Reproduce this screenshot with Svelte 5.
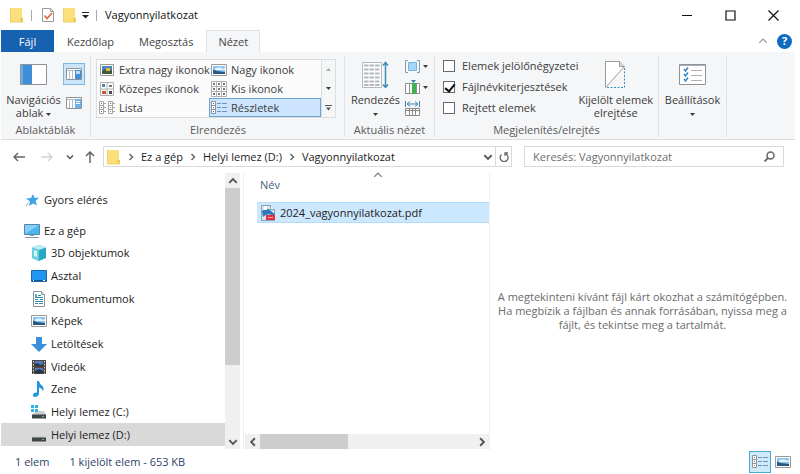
<script lang="ts">
	type Item = { label: string; icon: string };

	const tabs = ['Kezdőlap', 'Megosztás', 'Nézet'];
	let tab = $state('Nézet');

	const layouts: Item[] = [
		{ label: 'Extra nagy ikonok', icon: 'xl' },
		{ label: 'Nagy ikonok', icon: 'picture' },
		{ label: 'Közepes ikonok', icon: 'medium' },
		{ label: 'Kis ikonok', icon: 'small' },
		{ label: 'Lista', icon: 'list' },
		{ label: 'Részletek', icon: 'details' }
	];
	let layout = $state('Részletek');

	let options = $state([
		{ label: 'Elemek jelölőnégyzetei', checked: false },
		{ label: 'Fájlnévkiterjesztések', checked: true },
		{ label: 'Rejtett elemek', checked: false }
	]);

	const crumbs = ['Ez a gép', 'Helyi lemez (D:)', 'Vagyonnyilatkozat'];

	const places: Item[] = [
		{ label: '3D objektumok', icon: 'cube' },
		{ label: 'Asztal', icon: 'desktop' },
		{ label: 'Dokumentumok', icon: 'docs' },
		{ label: 'Képek', icon: 'picture' },
		{ label: 'Letöltések', icon: 'download' },
		{ label: 'Videók', icon: 'video' },
		{ label: 'Zene', icon: 'music' },
		{ label: 'Helyi lemez (C:)', icon: 'diskc' },
		{ label: 'Helyi lemez (D:)', icon: 'disk' }
	];
	let place = $state('Helyi lemez (D:)');
	let search = $state('');
</script>

{#snippet icon(name: string)}
	<svg class="icon" viewBox="0 0 16 16" aria-hidden="true">
		{#if name === 'folder'}
			<path d="M2 1h12v9l1 1v4H2z" fill="#fbdf7d" />
			<path d="M12 11h3v4h-3z" fill="#efc95a" />
			<path d="M2 1h1v14H2zM2 14.500h13v1H2z" fill="#f1d06a" />
		{:else if name === 'props'}
			<path d="M2.500 1.500h8l3 3v10h-11z" fill="#fff" stroke="#9a9a9a" />
			<path d="M10.500 1.500v3h3" fill="none" stroke="#9a9a9a" />
			<path d="M4.500 8.500l2.500 3 5-5.500" fill="none" stroke="#e0643c" stroke-width="1.600" />
		{:else if name === 'xl'}
			<path d="M1.500 2.500h13v11h-13z" fill="#fff" stroke="#9a9a9a" />
			<path d="M3 4h10v8H3z" fill="#4a86c4" />
			<path d="M3 9l3-2 3 2 4-1v4H3z" fill="#3f5a34" />
			<path d="M7 6h4v3H7z" fill="#e8b73c" />
		{:else if name === 'picture'}
			<path d="M.5 2.500h15v11H.5z" fill="#fff" stroke="#9a9a9a" />
			<path d="M2 4h12v8H2z" fill="#8ec5ee" />
			<path d="M4 6.500q5-2 8 .5l2-1v2H4z" fill="#e6f4fd" />
			<path d="M2 7.500l4 1.500 8 1v2H2z" fill="#2b5a80" />
		{:else if name === 'medium'}
			<path d="M1.500 1.500h13v13h-13zM8 2v12M2 8h12" fill="#fff" stroke="#b0b0b0" />
			<path d="M3 3h3v3H3z" fill="#4a86b8" />
			<path d="M10 4h3v2h-3z" fill="#777" />
			<path d="M3 10h4v3H3z" fill="#d0583e" />
			<path d="M10 10h3v3h-3z" fill="#3b5348" />
		{:else if name === 'small'}
			<path d="M.5.5h15v15H.5zM5.500 1v14M10.500 1v14M1 5.500h14M1 10.500h14" fill="#fff" stroke="#b0b0b0" />
			<path d="M2 2h2v2H2zM7 2h2v2H7zM12 2h2v2h-2zM2 7h2v2H2zM7 7h2v2H7zM12 7h2v2h-2zM2 12h2v2H2zM7 12h2v2H7zM12 12h2v2h-2z" fill="#777" />
		{:else if name === 'list'}
			<path d="M.5 1.500h4v12h-4zM.5 5.500h4M.5 9.500h4M9.500 1.500h4v12h-4zM9.500 5.500h4M9.500 9.500h4" fill="#fff" stroke="#a4a4a4" />
			<path d="M2 3.500h1M2 7.500h1M2 11.500h1M11 3.500h1M11 7.500h1M11 11.500h1" stroke="#777" />
			<path d="M5 3.500h2M5 7.500h2M5 11.500h2M14 3.500h2M14 7.500h2M14 11.500h2" stroke="#aaa" />
		{:else if name === 'details'}
			<path d="M.5 1.500h4v12h-4zM.5 5.500h4M.5 9.500h4" fill="#fff" stroke="#929292" />
			<path d="M2 3.500h1M2 7.500h1M2 11.500h1" stroke="#777" />
			<path d="M6 3.500h4M6 7.500h4M6 11.500h4M11 3.500h5M11 7.500h5M11 11.500h5" stroke="#6f93bd" />
		{:else if name === 'star'}
			<path d="M9 2l1.500 4 4.500-.5-3.500 3.500 1.500 4.500-4-2L5 14l1-4.500L2 6.500l5-.5z" fill="#3ba5e4" />
			<path d="M4.500 10.500L2 14" stroke="#8aa5b8" />
		{:else if name === 'pc'}
			<path d="M.5 1.500h15v10H.5z" fill="#4db4ef" stroke="#5686a8" />
			<path d="M1 2h14L1 11z" fill="#84d0f8" />
			<path d="M6 12h4v1H6z" fill="#86a5ba" />
			<path d="M1 14h14v1H1z" fill="#8e9aa3" />
		{:else if name === 'cube'}
			<path d="M8 0l7 2.500v10.500l-7 3-7-3V2.500z" fill="#27a8c4" />
			<path d="M8 0l7 2.500-7 2.500-7-2.500z" fill="#bdeef5" />
			<path d="M1 2.500l7 2.500v11l-7-3z" fill="#6cd0df" />
			<path d="M3 5l3 1v6l-3-1z" fill="#d6f4f7" />
		{:else if name === 'desktop'}
			<path d="M.5 2.500h15v11H.5z" fill="#2196f3" stroke="#1769b0" />
			<path d="M1 12h14v1H1z" fill="#12568f" />
			<path d="M2 12h1v1H2zM12 12h2v1h-2z" fill="#fff" />
		{:else if name === 'docs'}
			<path d="M2.500.5h8l3 3v12h-11z" fill="#fff" stroke="#8b9499" />
			<path d="M10.500.5v3h3" fill="#dde4e8" stroke="#8b9499" />
			<path d="M7 4.500h3M4 6.500h8M4 8.500h3M9 8.500h3M4 10.500h8M4 12.500h3M8 12.500h4" stroke="#3488a8" />
			<path d="M4 3h2v3H4z" fill="#69aec8" />
		{:else if name === 'download'}
			<path d="M5 1h6v7h5l-8 8-8-8h5z" fill="#3a8fdd" />
		{:else if name === 'video'}
			<path d="M1 1h14v14H1z" fill="#4a4540" />
			<path d="M4 2h8v5H4zM4 9h8v5H4z" fill="#4f7dbd" />
			<path d="M4 5l3-1 2 2 3-1v2H4zM4 12l4-2 4 2v2H4z" fill="#24374e" />
			<path d="M2.500 2v13M13.500 2v13" stroke="#d9cda9" stroke-dasharray="1.500 1.500" />
		{:else if name === 'music'}
			<path d="M6 0h2q.5 3 3 4.500 2.500 2.500 1 6-.5-3-4-4V13q-1 3-4 3-2.500-.5-2-2.500Q3 11 6 11.500z" fill="#2196dc" />
		{:else if name === 'disk' || name === 'diskc'}
			{#if name === 'diskc'}
				<path d="M5 7h8l2 4H1z" fill="#c9cdd0" />
				<path d="M0 1h3v3H0zM4 1h3v3H4zM0 5h3v3H0zM4 5h3v3H4z" fill="#2fb4dc" />
			{:else}
				<path d="M3 9h10l2 2H1z" fill="#c9cdd0" />
			{/if}
			<path d="M1 10.500h14v4H1z" fill="#3e4447" />
			<path d="M11 12h2v1h-2z" fill="#54d46c" />
		{:else if name === 'pdf'}
			<path d="M1.500.5h9l4 4v11h-13z" fill="#d6e5f2" stroke="#8aa1b5" />
			<path d="M10.500.5v4h4" fill="#fff" stroke="#8aa1b5" />
			<path d="M2 6q5-4 8-1t5 4l-2 2Q8 7 3 12z" fill="#2d78b5" />
			<path d="M4 1h3v4H4z" fill="#fff" />
			<path d="M6 10h9v5H6z" fill="#e3303e" />
			<path d="M8 12.500h5" stroke="#f5a0a5" />
		{/if}
	</svg>
{/snippet}

{#snippet chevron(dir: string)}
	<svg class="chev {dir}" viewBox="0 0 8 8" aria-hidden="true">
		<path d="M1 2.500L4 5.500 7 2.500" fill="none" stroke="currentColor" />
	</svg>
{/snippet}

{#snippet caret()}
	<svg class="caret" viewBox="0 0 5 3" aria-hidden="true"><path d="M0 0h5L2.500 3z" fill="currentColor" /></svg>
{/snippet}

<div class="window">
	<header class="titlebar">
		{@render icon('folder')}
		<span class="sep"></span>
		<button aria-label="Tulajdonságok">{@render icon('props')}</button>
		<button aria-label="Új mappa">{@render icon('folder')}</button>
		<button class="customize" aria-label="Testreszabás">
			<svg width="7" height="7" viewBox="0 0 7 7"><path d="M0 .5h7" stroke="#222" /><path d="M0 3h7L3.500 6.500z" fill="#222" /></svg>
		</button>
		<span class="sep"></span>
		<h1>Vagyonnyilatkozat</h1>
		<div class="controls">
			<button aria-label="Kis méret">
				<svg width="11" height="11" viewBox="0 0 11 11"><path d="M0 5.500h10" stroke="#111" /></svg>
			</button>
			<button aria-label="Teljes méret">
				<svg width="11" height="11" viewBox="0 0 11 11"><path d="M1 1h9v9H1z" fill="none" stroke="#111" stroke-width="1.200" /></svg>
			</button>
			<button aria-label="Bezárás">
				<svg width="11" height="11" viewBox="0 0 11 11"><path d="M.5.5l10 10M10.500.5l-10 10" stroke="#111" stroke-width="1.200" /></svg>
			</button>
		</div>
	</header>

	<nav class="tabs">
		<button class="file">Fájl</button>
		{#each tabs as t}
			<button class:active={tab === t} onclick={() => (tab = t)}>{t}</button>
		{/each}
		<div class="help">
			<button class="collapse" aria-label="Menüszalag összecsukása">{@render chevron('up')}</button>
			<button class="ask" aria-label="Súgó">?</button>
		</div>
	</nav>

	<div class="ribbon">
		<section class="panes">
			<div class="content">
				<button class="big">
					<svg width="27" height="21" viewBox="0 0 27 21">
						<path d="M.5.5h26v20H.5z" fill="#fff" stroke="#8c9298" />
						<path d="M1 1h11v19H1z" fill="#3f8fd8" />
						<path d="M1 1h2v19H1z" fill="#6cabe4" />
					</svg>
					<span>Navigációs<br />ablak {@render caret()}</span>
				</button>
				<div class="toggles">
					<button class="on" aria-label="Betekintő ablaktábla">
						<svg width="16" height="12" viewBox="0 0 16 12">
							<path d="M.5.5h15v11H.5z" fill="#fff" stroke="#8c9298" />
							<path d="M9 2h6v9H9z" fill="#3f8fd8" /><path d="M10 3h4v3h-4z" fill="#b9d9f4" />
							<path d="M3.500 3v8M6.500 3v8M1 2.500h8" stroke="#b8bcc0" />
						</svg>
					</button>
					<button aria-label="Részletek ablaktábla">
						<svg width="16" height="12" viewBox="0 0 16 12">
							<path d="M.5.5h15v11H.5z" fill="#fff" stroke="#8c9298" />
							<path d="M9 2h6v9H9z" fill="#6fb1ea" /><path d="M10 4.500h4M10 6.500h4" stroke="#fff" />
							<path d="M3.500 3v8M6.500 3v8M1 2.500h8" stroke="#b8bcc0" />
						</svg>
					</button>
				</div>
			</div>
			<h2>Ablaktáblák</h2>
		</section>

		<section class="arrange">
			<div class="content">
				<div class="gallery">
					{#each layouts as l}
						<button class:active={layout === l.label} onclick={() => (layout = l.label)}>
							{@render icon(l.icon)}{l.label}
						</button>
					{/each}
				</div>
				<div class="spin">
					<button class="off up" aria-label="Fel">{@render caret()}</button>
					<button aria-label="Le">{@render caret()}</button>
					<button aria-label="Több">
						<svg width="7" height="6" viewBox="0 0 7 6"><path d="M0 .5h7" stroke="#555" /><path d="M1 2.500h5L3.500 5.500z" fill="#555" /></svg>
					</button>
				</div>
			</div>
			<h2>Elrendezés</h2>
		</section>

		<section class="current">
			<div class="content">
				<button class="big">
					<svg width="27" height="27" viewBox="0 0 27 27">
						<path d="M.5 1.500h19v25H.5z" fill="#fff" stroke="#b4b8bb" />
						<path d="M2 4.500h16M2 8.500h16M2 12.500h16M2 16.500h16M2 20.500h16M2 24h16" stroke="#b3b8bb" stroke-dasharray="4.500 1" stroke-width="2" />
						<path d="M23.500 2v24M21 4.500L23.500 1.500 26 4.500M21 23.500l2.500 3 2.500-3" fill="none" stroke="#3e8fb4" stroke-width="1.500" />
					</svg>
					<span>Rendezés<br />{@render caret()}</span>
				</button>
				<div class="tools">
					<button aria-label="Csoportosítás">
						<svg width="15" height="15" viewBox="0 0 15 15">
							<path d="M3 1.500H.5v12H3M12 1.500h2.500v12H12" fill="none" stroke="#8a9aa5" />
							<path d="M3.500 3.500h8v8h-8z" fill="#a8d8f8" stroke="#72b5e0" />
						</svg>
						{@render caret()}
					</button>
					<button aria-label="Oszlopok hozzáadása">
						<svg width="15" height="15" viewBox="0 0 15 15">
							<path d="M.5 3.500h14v10H.5zM4.500 3v11M11.500 3v11" fill="#fff" stroke="#8f8f8f" />
							<path d="M7 3h4v11H7z" fill="#3fb454" /><path d="M6 0h5L8.500 3z" fill="#3b82a6" />
						</svg>
						{@render caret()}
					</button>
					<button aria-label="Oszlopok méretezése">
						<svg width="15" height="15" viewBox="0 0 15 15">
							<path d="M.5 0v6M14.500 0v6M2 3h11M5 .5L2 3l3 2.500M10 .5L13 3l-3 2.500" fill="none" stroke="#3a87b5" />
							<path d="M.5 7.500h14v7H.5zM4.500 7v8M7.500 7v8M10.500 7v8M0 9.500h15" fill="#fff" stroke="#8a8a8a" />
						</svg>
					</button>
				</div>
			</div>
			<h2>Aktuális nézet</h2>
		</section>

		<section class="show">
			<div class="content">
				<div class="checks">
					{#each options as o}
						<label><input type="checkbox" bind:checked={o.checked} />{o.label}</label>
					{/each}
				</div>
				<button class="big">
					<svg width="21" height="27" viewBox="0 0 21 27">
						<path d="M.5 26.500V.5h14l5 5-19 21z" fill="#fff" stroke="#9a9a9a" />
						<path d="M14.500.5v5h5" fill="#ddd" stroke="#9a9a9a" />
						<path d="M19.500 7v19.500H2" fill="none" stroke="#3990c4" stroke-dasharray="2 1.500" />
					</svg>
					<span>Kijelölt elemek<br />elrejtése</span>
				</button>
			</div>
			<h2>Megjelenítés/elrejtés</h2>
		</section>

		<section class="settings">
			<div class="content">
				<button class="big">
					<svg width="27" height="21" viewBox="0 0 27 21">
						<path d="M.5.5h26v20H.5z" fill="#fff" stroke="#8c9298" />
						<path d="M1 1.500h25" stroke="#aab0b5" />
						<path d="M5 5l1.500 2L9 3.500M5 10l1.500 2L9 8.500M5 15l1.500 2L9 13.500" fill="none" stroke="#3388c4" stroke-width="1.500" />
						<path d="M12 6.500h11M12 11.500h11M12 16.500h11" stroke="#b0b0b0" />
					</svg>
					<span>Beállítások<br />{@render caret()}</span>
				</button>
			</div>
		</section>
	</div>

	<div class="address">
		<div class="history">
			<button aria-label="Vissza">
				<svg width="12" height="10" viewBox="0 0 12 10"><path d="M12 5H1M5 1L1 5l4 4" fill="none" stroke="#666" stroke-width="1.500" /></svg>
			</button>
			<button aria-label="Előre" disabled>
				<svg width="12" height="10" viewBox="0 0 12 10"><path d="M0 5h11M7 1l4 4-4 4" fill="none" stroke="#d4d4d4" stroke-width="1.500" /></svg>
			</button>
			<button class="recent" aria-label="Legutóbbi helyek">{@render chevron('down')}</button>
			<button aria-label="Egy szinttel feljebb">
				<svg width="10" height="12" viewBox="0 0 10 12"><path d="M5 12V1M1 5l4-4 4 4" fill="none" stroke="#666" stroke-width="1.500" /></svg>
			</button>
		</div>
		<div class="path">
			{@render icon('folder')}
			{#each crumbs as c}
				{@render chevron('right')}
				<a href="#{c}">{c}</a>
			{/each}
			<button class="drop" aria-label="Korábbi helyek">{@render chevron('down')}</button>
			<button class="refresh" aria-label="Frissítés">
				<svg width="10" height="10" viewBox="0 0 10 10"><path d="M7.500 2.500A4 4 0 1 1 3 2M1 1h3v3" fill="none" stroke="#666" stroke-width="1.300" /></svg>
			</button>
		</div>
		<label class="search">
			<input type="text" aria-label="Keresés" placeholder="Keresés: Vagyonnyilatkozat" bind:value={search} />
			<svg width="11" height="11" viewBox="0 0 11 11"><circle cx="6.500" cy="4.500" r="3.500" fill="none" stroke="#666" stroke-width="1.500" /><path d="M4 7L.5 10.500" stroke="#666" stroke-width="1.800" /></svg>
		</label>
	</div>

	<main>
		<nav class="tree">
			<a class="root quick" href="#quick">{@render icon('star')}Gyors elérés</a>
			<a class="root" href="#pc">{@render icon('pc')}Ez a gép</a>
			<ul>
				{#each places as p}
					<li>
						<a href="#{p.icon}" class:active={place === p.label} onclick={() => (place = p.label)}>
							{@render icon(p.icon)}{p.label}
						</a>
					</li>
				{/each}
			</ul>
		</nav>
		<div class="vscroll">
			<button aria-label="Görgetés fel">{@render chevron('up')}</button>
			<span class="thumb"></span>
			<button aria-label="Görgetés le">{@render chevron('down')}</button>
		</div>

		<section class="files">
			<div class="sort">{@render chevron('up')}</div>
			<table>
				<thead><tr><th>Név</th></tr></thead>
				<tbody>
					<tr><td><span>{@render icon('pdf')}2024_vagyonnyilatkozat.pdf</span></td></tr>
				</tbody>
			</table>
			<div class="hscroll">
				<button aria-label="Görgetés balra">{@render chevron('left')}</button>
				<span class="thumb"></span>
				<button aria-label="Görgetés jobbra">{@render chevron('right')}</button>
			</div>
		</section>

		<aside>
			<p>A megtekinteni kívánt fájl kárt okozhat a számítógépben. Ha megbízik a fájlban és annak forrásában, nyissa meg a fájlt, és tekintse meg a tartalmát.</p>
		</aside>
	</main>

	<footer>
		<span>1 elem</span>
		<span>1 kijelölt elem - 653 KB</span>
		<div class="views">
			<button class="on" aria-label="Részletek">{@render icon('details')}</button>
			<button aria-label="Nagy ikonok">{@render icon('picture')}</button>
		</div>
	</footer>
</div>

<style>
	:global(body) {
		background: #fff;
	}

	* {
		box-sizing: border-box;
	}

	.window {
		display: flex;
		flex-direction: column;
		min-height: 100vh;
		padding: 0 5px 0 1px;
		font: 11px/14px 'Open Sans', 'Noto Sans', sans-serif;
		color: #222;
	}

	button {
		display: flex;
		align-items: center;
		justify-content: center;
		padding: 0;
		border: 0;
		background: none;
		font: inherit;
		color: inherit;
	}

	a {
		color: inherit;
		text-decoration: none;
	}

	h1,
	h2 {
		margin: 0;
		font: inherit;
	}

	svg {
		flex: none;
	}

	.icon {
		width: 16px;
		height: 16px;
	}

	.chev {
		width: 10px;
		height: 10px;
		color: #555;
		stroke-width: 1.5;
	}

	.chev.up {
		transform: rotate(180deg);
	}

	.chev.right {
		transform: rotate(-90deg);
	}

	.chev.left {
		transform: rotate(90deg);
	}

	.caret {
		width: 5px;
		height: 3px;
		vertical-align: middle;
	}

	/* title bar */
	.titlebar {
		display: flex;
		align-items: center;
		height: 30px;
		padding-left: 7px;
	}

	.titlebar .sep {
		width: 1px;
		height: 11px;
		margin: 0 8px 0 7px;
		background: #aaa;
	}

	.titlebar button + button {
		margin-left: 5px;
	}

	.titlebar h1 {
		font-size: 11px;
		color: #111;
	}

	.titlebar .controls {
		display: flex;
		margin-left: auto;
	}

	.titlebar .controls button {
		width: 43px;
		height: 28px;
		margin: 0;
	}

	/* tabs */
	.tabs {
		display: flex;
		height: 22px;
		color: #444;
	}

	.tabs > button {
		padding: 0 11px;
		border: 1px solid transparent;
		border-bottom: 0;
		margin-right: 1px;
	}

	.tabs > .file {
		width: 53px;
		background: #1762b0;
		color: #fff;
	}

	.tabs > .active {
		background: #f5f6f7;
		border-color: #dfe1e3;
	}

	.help {
		display: flex;
		align-items: center;
		gap: 9px;
		margin: 0 3px 0 auto;
	}

	.collapse .chev {
		color: #999;
		stroke-width: 1;
	}

	.ask {
		width: 15px;
		height: 15px;
		border-radius: 50%;
		background: #0f6bbd;
		color: #fff;
		font-weight: bold;
	}

	/* ribbon */
	.ribbon {
		display: flex;
		height: 88px;
		padding: 4px 0 2px;
		background: #f5f6f7;
		border-bottom: 1px solid #dcdddf;
		color: #3c3c3c;
	}

	.ribbon > section {
		display: flex;
		flex-direction: column;
		padding: 3px 4px 0;
		border-right: 1px solid #e2e3e5;
	}

	.ribbon .content {
		display: flex;
		flex: 1;
		justify-content: center;
		align-items: flex-start;
	}

	.ribbon h2 {
		line-height: 14px;
		text-align: center;
		color: #5a5a5a;
	}

	.ribbon section.panes {
		width: 90px;
	}

	.ribbon section.arrange {
		width: 254px;
		padding-left: 5px;
	}

	.ribbon section.current {
		width: 90px;
	}

	.ribbon section.show {
		width: 224px;
	}

	.ribbon section.settings {
		width: 68px;
	}

	.big {
		flex-direction: column;
		gap: 5px;
		padding-top: 2px;
		white-space: nowrap;
		line-height: 13px;
	}

	.panes .big,
	.settings .big {
		gap: 8px;
		padding-top: 5px;
	}

	.toggles {
		display: grid;
		gap: 7px;
		margin-left: 2px;
		padding-top: 4px;
	}

	.toggles button {
		width: 22px;
		height: 22px;
	}

	.toggles .on {
		background: #cce4f7;
		border: 1px solid #7fb6e0;
	}

	.arrange .content {
		justify-content: flex-start;
	}

	.gallery {
		display: grid;
		grid-template: repeat(3, 19px) / 112px 112px;
		border: 1px solid #dcdddf;
		background: #fbfbfc;
	}

	.gallery button {
		justify-content: flex-start;
		gap: 4px;
		padding: 0 1px;
		border: 1px solid transparent;
		white-space: nowrap;
	}

	.gallery .active {
		background: #cce4ff;
		border-color: #6aa5d8;
	}

	.spin {
		display: grid;
		grid-template: repeat(3, 19px) / 13px;
		border: 1px solid #dcdddf;
		border-left: 0;
	}

	.spin .off {
		color: #aaa;
	}

	.spin .up .caret {
		transform: rotate(180deg);
	}

	.tools {
		display: grid;
		gap: 6px;
		margin-left: 5px;
	}

	.tools button {
		justify-content: flex-start;
		gap: 3px;
	}

	.show .content {
		justify-content: space-between;
		padding: 0 3px 0 4px;
	}

	.checks {
		display: grid;
		gap: 7px;
	}

	.checks label {
		display: flex;
		align-items: center;
		gap: 7px;
		white-space: nowrap;
	}

	.checks input {
		appearance: none;
		width: 12px;
		height: 12px;
		margin: 0;
		border: 1px solid #6a6a6a;
		background: #fff;
	}

	.checks input:checked::before {
		content: '';
		display: block;
		width: 4px;
		height: 8px;
		margin: 0 0 0 3px;
		border: solid #111;
		border-width: 0 2px 2px 0;
		transform: rotate(40deg);
	}

	/* address bar */
	.address {
		display: flex;
		gap: 12px;
		height: 33px;
		padding: 6px 11px 6px 0;
	}

	.history {
		display: flex;
		align-items: center;
		gap: 16px;
		padding-left: 12px;
	}

	.history .recent {
		margin: 0 -5px 0 -3px;
	}

	.history .recent .chev {
		width: 8px;
		height: 8px;
	}

	.path {
		display: flex;
		flex: 1;
		align-items: center;
		gap: 6px;
		margin-left: -4px;
		padding-left: 1px;
		border: 1px solid #d9d9d9;
		white-space: nowrap;
	}

	.path > .chev {
		width: 8px;
		height: 8px;
		color: #666;
	}

	.path .drop {
		margin-left: auto;
	}

	.path .refresh {
		align-self: stretch;
		width: 16px;
		margin-left: -4px;
		border-left: 1px solid #d9d9d9;
	}

	.path .refresh svg {
		transform: scaleX(-1);
	}

	.search {
		display: flex;
		align-items: center;
		width: 260px;
		padding: 0 8px;
		border: 1px solid #d9d9d9;
	}

	.search input {
		flex: 1;
		min-width: 0;
		padding: 0;
		border: 0;
		outline: 0;
		background: none;
		font: inherit;
	}

	.search input::placeholder {
		color: #6d6d6d;
		opacity: 1;
	}

	/* panes */
	main {
		display: flex;
		flex: 1;
	}

	.tree {
		display: flex;
		flex: 0 1 224px;
		flex-direction: column;
		padding: 15px 0 3px;
	}

	.tree a {
		display: flex;
		align-items: center;
		gap: 4px;
		height: 100%;
		padding-left: 30px;
	}

	.tree .root {
		height: 23px;
		padding-left: 23px;
	}

	.tree .quick {
		margin-bottom: 8px;
	}

	.tree ul {
		display: grid;
		flex: 1;
		grid-auto-rows: 1fr;
		margin: 0;
		padding: 0;
		list-style: none;
	}

	.tree .active {
		background: #d9d9d9;
	}

	.vscroll,
	.hscroll {
		display: flex;
		background: #f0f0f0;
	}

	.vscroll {
		flex-direction: column;
		width: 15px;
	}

	.vscroll button,
	.hscroll button {
		width: 15px;
		height: 15px;
	}

	.thumb {
		background: #cdcdcd;
	}

	.vscroll .thumb {
		height: 64%;
		margin-bottom: auto;
	}

	.hscroll .thumb {
		width: 36%;
		margin-right: auto;
	}

	.files {
		display: flex;
		flex: 0 1 247px;
		flex-direction: column;
		margin-left: 3px;
		padding-left: 1px;
		border-left: 1px solid #f0f0f0;
		border-right: 1px solid #f0f0f0;
	}

	.sort {
		display: flex;
		justify-content: center;
		padding-left: 22px;
		height: 5px;
	}

	.sort .chev {
		margin-top: -3px;
		color: #777;
		stroke-width: 1;
	}

	table {
		margin: 0 0 auto 12px;
		border-spacing: 0;
	}

	th {
		height: 23px;
		padding: 0 0 10px 3px;
		font-weight: normal;
		text-align: left;
		color: #4c607a;
	}

	td {
		height: 21px;
		padding: 0 3px;
		background: #cce8ff;
		border: solid #b4dcf8;
		border-width: 1px 0;
	}

	td span {
		display: flex;
		align-items: center;
		gap: 4px;
	}

	aside {
		display: flex;
		flex: 1;
		align-items: center;
		justify-content: center;
		padding: 0 5px;
		color: #6b6b6b;
		text-align: center;
	}

	aside p {
		margin: 0;
	}

	/* status bar */
	footer {
		display: flex;
		align-items: center;
		gap: 20px;
		height: 25px;
		padding: 0 3px 0 14px;
		color: #2d4468;
	}

	.views {
		display: flex;
		gap: 3px;
		margin-left: auto;
	}

	.views button {
		width: 18px;
		height: 22px;
	}

	.views .on {
		width: 22px;
		background: #cdeafb;
		border: 1px solid #4ba7cf;
	}
</style>
